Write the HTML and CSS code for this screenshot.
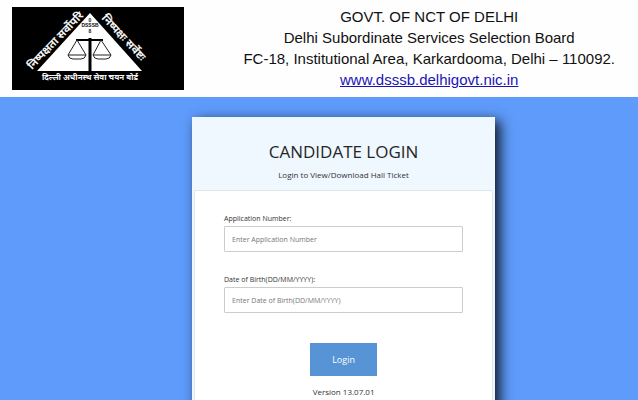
FILE: index.html
```html
<!DOCTYPE html>
<html lang="en">
<head>
<meta charset="utf-8">
<meta name="viewport" content="width=device-width, initial-scale=1">
<title>Candidate Login</title>
<link rel="stylesheet" href="styles.css">
</head>
<body>
<header class="banner">
  <svg class="logo" viewBox="0 0 172 83" role="img" aria-label="DSSSB emblem">
    <rect width="172" height="83" fill="#000"/>
    <path d="M78 6 L130 64 H25 Z" fill="#fff"/>
    <g class="logo-mark" text-anchor="middle">
      <text x="78" y="15">0</text>
      <text x="78" y="20">DSSSB</text>
      <text x="78" y="26">8</text>
    </g>
    <path d="M64 33 H91" fill="none" stroke="#000" stroke-width="2"/>
    <path d="M78 31 V64" fill="none" stroke="#000" stroke-width="3"/>
    <path d="M65 33 L56 48 H74 Z M56 48 Q57 52 61 52 H69 Q73 52 74 48 M89 33 L81 48 H99 Z M81 48 Q82 52 86 52 H94 Q98 52 99 48" fill="none" stroke="#222" stroke-width="1"/>
    <g class="logo-motto" text-anchor="middle" lang="hi">
      <text transform="translate(46 36) rotate(-46)">निष्पक्षता सर्वोपरि</text>
      <text transform="translate(109 33) rotate(47)">निष्पक्षः सर्वेष्टः</text>
      <text class="logo-name" x="78" y="73">दिल्ली अधीनस्थ सेवा चयन बोर्ड</text>
    </g>
  </svg>
  <div class="banner-text">
    <p>GOVT. OF NCT OF DELHI</p>
    <p>Delhi Subordinate Services Selection Board</p>
    <p>FC-18, Institutional Area, Karkardooma, Delhi – 110092.</p>
    <p><a class="site-link" href="#">www.dsssb.delhigovt.nic.in</a></p>
  </div>
</header>
<main class="page">
  <section class="card">
    <div class="card-head">
      <h1>CANDIDATE LOGIN</h1>
      <p>Login to View/Download Hall Ticket</p>
    </div>
    <form class="panel">
      <div class="field">
        <label for="application">Application Number:</label>
        <input id="application" type="text" placeholder="Enter Application Number">
      </div>
      <div class="field">
        <label for="birth">Date of Birth(DD/MM/YYYY):</label>
        <input id="birth" type="text" placeholder="Enter Date of Birth(DD/MM/YYYY)">
      </div>
      <button class="login" type="submit">Login</button>
      <p class="version">Version 13.07.01</p>
    </form>
  </section>
</main>
</body>
</html>
```
FILE: styles.css
```css
* {
  box-sizing: border-box;
}

body {
  margin: 0;
  min-height: 100vh;
  display: flex;
  flex-direction: column;
  background: #5e9bfa;
  color: #333;
  font-family: "Open Sans", "Noto Sans", sans-serif;
  overflow-x: hidden;
}

p,
h1 {
  margin: 0;
}

.banner {
  display: flex;
  justify-content: space-between;
  align-items: flex-start;
  padding: 6px 23px 7px 12px;
  background: #fefefe;
}

.logo {
  width: 172px;
  flex: none;
  margin-top: 1px;
}

.logo-mark {
  font: bold 5px "Liberation Sans", sans-serif;
  fill: #111;
}

.logo-motto {
  font: bold 11px "Noto Sans Devanagari", "Noto Sans", sans-serif;
  fill: #f4f4f4;
}

.logo-name {
  font-size: 8px;
}

.banner-text {
  color: #111;
  font: 15px/21px "Liberation Sans", sans-serif;
  text-align: center;
}

.site-link {
  color: #1c13b5;
}

.page {
  flex: 1;
  padding-top: 20px;
}

.card {
  width: 47.5%;
  margin-left: 30.1%;
  padding: 0 2px 2px;
  background: #eff7ff;
  box-shadow: 5px 4px 12px rgba(0, 0, 0, 0.85);
}

.card-head {
  padding: 22px 0 5px;
  text-align: center;
}

.card-head h1 {
  color: #262626;
  font-size: 17px;
  font-weight: 400;
  line-height: 26px;
}

.card-head p {
  font-size: 8px;
  line-height: 20px;
}

.panel {
  display: flex;
  flex-direction: column;
  padding: 21px 29px;
  border: 1px solid #dfe5e8;
  border-radius: 2px;
  background: #fff;
}

.field {
  display: flex;
  flex-direction: column;
  margin-bottom: 21px;
}

.field label {
  font-size: 7px;
  line-height: 14px;
}

.field input {
  width: 100%;
  height: 26px;
  padding: 0 7px;
  border: 1px solid #ccc;
  border-radius: 1px;
  color: #333;
  font: 7px "Open Sans", sans-serif;
}

.field input::placeholder {
  color: #777;
  opacity: 1;
}

.login {
  align-self: center;
  width: 67px;
  height: 33px;
  margin: 9px 0;
  border: 0;
  background: #5694d6;
  color: #fff;
  font: 9px "Open Sans", sans-serif;
}

.version {
  font-size: 8px;
  line-height: 14px;
  text-align: center;
}
```
